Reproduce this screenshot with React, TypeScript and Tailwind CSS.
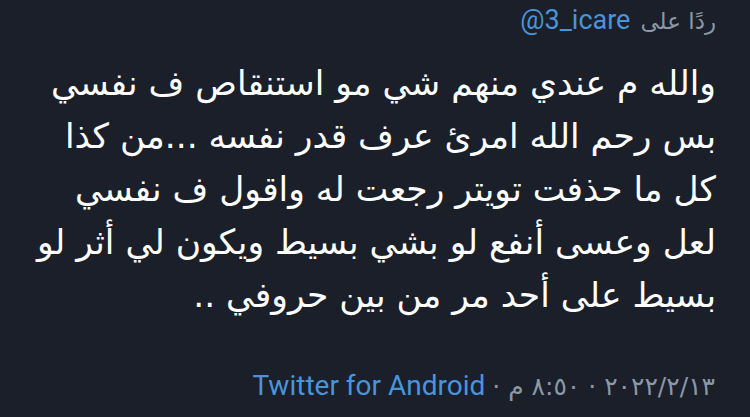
const lines = [
  "والله م عندي منهم شي مو استنقاص ف نفسي",
  "بس رحم الله امرئ عرف قدر نفسه ...من كذا",
  "كل ما حذفت تويتر رجعت له واقول ف نفسي",
  "لعل وعسى أنفع لو بشي بسيط ويكون لي أثر لو",
  "بسيط على أحد مر من بين حروفي ..",
];

const latin = { fontFamily: 'Roboto, "DejaVu Sans", sans-serif' };

export default function App() {
  return (
    <div
      dir="rtl"
      className="w-[750px] h-[417px] bg-[#1a1f29] overflow-hidden pr-[34px] pl-4"
      style={{ fontFamily: '"DejaVu Sans", "Noto Sans", sans-serif' }}
    >
      <div className="pt-[3px] text-[23px] leading-[34px] text-[#8b98a5] flex items-baseline gap-[10px]">
        <span>ردًا على</span>
        <span className="text-[#4a94db] text-[27px]" dir="ltr" style={latin}>
          @3_icare
        </span>
      </div>
      <div className="mt-[19px] text-white text-[34.5px] leading-[53px]">
        {lines.map((l) => (
          <div key={l} className="whitespace-nowrap">
            {l}
          </div>
        ))}
      </div>
      <div className="mt-[49px] pr-[1px] text-[25px] leading-[30px] text-[#8b98a5] whitespace-nowrap flex items-baseline gap-[7px]">
        <span>٢٠٢٢/٢/١٣ · ٨:٥٠ م ·</span>
        <span className="text-[#4a94db] text-[28px]" style={latin}>
          Twitter for Android
        </span>
      </div>
    </div>
  );
}
